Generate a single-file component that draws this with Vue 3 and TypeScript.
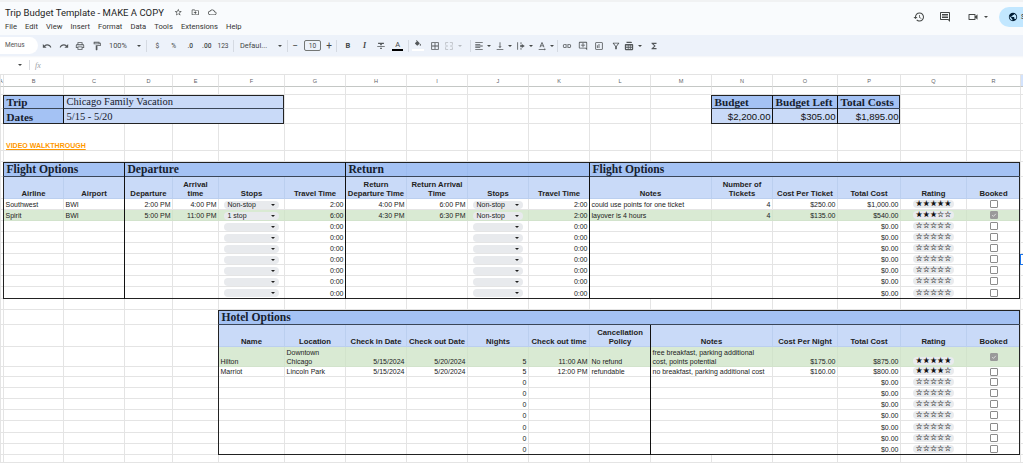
<script setup lang="ts">
// Trip budget sheet: Google Sheets chrome above one CSS grid that holds every cell.
type Cell = {
  r: number; c: number; rs: number; cs: number; cls: string
  text?: string; kind?: 'chip' | 'stars' | 'check'; stars?: number; on?: boolean
}
type Tool = { w: number; icon?: string; text?: string; cls?: string; caret?: boolean; sep?: boolean }

const icons: Record<string, string> = {
  star: 'M22 9.24l-7.19-.62L12 2 9.19 8.63 2 9.24l5.46 4.73L5.82 21 12 17.27 18.18 21l-1.63-7.03L22 9.24zM12 15.4l-3.76 2.27 1-4.28-3.32-2.88 4.38-.38L12 6.1l1.71 4.04 4.38.38-3.32 2.88 1 4.28L12 15.4z',
  folder: 'M20 6h-8l-2-2H4c-1.1 0-2 .9-2 2v12c0 1.1.9 2 2 2h16c1.1 0 2-.9 2-2V8c0-1.1-.9-2-2-2zm0 12H4V6h5.17l2 2H20v10zM12 9l-1.4 1.4 1.6 1.6H8v2h4.2l-1.6 1.6L12 17l4-4z',
  cloud: 'M19.35 10.04C18.67 6.59 15.64 4 12 4 9.11 4 6.6 5.64 5.35 8.04 2.34 8.36 0 10.91 0 14c0 3.31 2.69 6 6 6h13c2.76 0 5-2.24 5-5 0-2.64-2.05-4.78-4.65-4.96zM19 18H6c-2.21 0-4-1.79-4-4 0-2.05 1.53-3.76 3.56-3.97l1.07-.11.5-.95C8.08 7.14 9.94 6 12 6c2.62 0 4.88 1.86 5.39 4.43l.3 1.5 1.53.11c1.56.1 2.78 1.41 2.78 2.96 0 1.65-1.35 3-3 3z',
  history: 'M13 3c-4.97 0-9 4.03-9 9H1l3.89 3.89.07.14L9 12H6c0-3.87 3.13-7 7-7s7 3.13 7 7-3.13 7-7 7c-1.93 0-3.68-.79-4.94-2.06l-1.42 1.42C8.27 19.99 10.51 21 13 21c4.97 0 9-4.03 9-9s-4.03-9-9-9zm-1 5v5l4.28 2.54.72-1.21-3.5-2.08V8H12z',
  comment: 'M21.99 4c0-1.1-.89-2-1.99-2H4c-1.1 0-2 .9-2 2v12c0 1.1.9 2 2 2h14l4 4-.01-18zM20 4v13.17L18.83 16H4V4h16zM6 12h12v2H6zm0-3h12v2H6zm0-3h12v2H6z',
  video: 'M15 8v8H5V8h10m1-2H4c-.55 0-1 .45-1 1v10c0 .55.45 1 1 1h12c.55 0 1-.45 1-1v-3.5l4 4v-11l-4 4V7c0-.55-.45-1-1-1z',
  globe: 'M12 2C6.48 2 2 6.48 2 12s4.48 10 10 10 10-4.48 10-10S17.52 2 12 2zm-1 17.93c-3.95-.49-7-3.85-7-7.93 0-.62.08-1.21.21-1.79L9 15v1c0 1.1.9 2 2 2v1.93zm6.9-2.54c-.26-.81-1-1.39-1.9-1.39h-1v-3c0-.55-.45-1-1-1H8v-2h2c.55 0 1-.45 1-1V7h2c1.1 0 2-.9 2-2v-.41c2.93 1.19 5 4.06 5 7.41 0 2.08-.8 3.97-2.1 5.39z',
  undo: 'M12.5 8c-2.65 0-5.05.99-6.9 2.6L2 7v9h9l-3.62-3.62c1.39-1.16 3.16-1.88 5.12-1.88 3.54 0 6.55 2.31 7.6 5.5l2.37-.78C21.08 11.03 17.15 8 12.5 8z',
  redo: 'M18.4 10.6C16.55 8.99 14.15 8 11.5 8c-4.65 0-8.58 3.03-9.96 7.22L3.9 16c1.05-3.19 4.05-5.5 7.6-5.5 1.95 0 3.73.72 5.12 1.88L13 16h9V7l-3.6 3.6z',
  print: 'M19 8h-1V3H6v5H5c-1.66 0-3 1.34-3 3v6h4v4h12v-4h4v-6c0-1.66-1.34-3-3-3zM8 5h8v3H8V5zm8 12v2H8v-4h8v2zm2-2v-2H6v2H4v-4c0-.55.45-1 1-1h14c.55 0 1 .45 1 1v4h-2z',
  paint: 'M18 4V3c0-.55-.45-1-1-1H5c-.55 0-1 .45-1 1v4c0 .55.45 1 1 1h12c.55 0 1-.45 1-1V6h1v4H9v11c0 .55.45 1 1 1h2c.55 0 1-.45 1-1v-9h8V4h-3zM16 6H6V4h10v2z',
  strike: 'M10 19h4v-3h-4v3zM5 4v3h5v3h4V7h5V4H5zM3 14h18v-2H3v2z',
  fill: 'M16.56 8.94L7.62 0 6.21 1.41l2.38 2.38-5.15 5.15c-.59.59-.59 1.54 0 2.12l5.5 5.5c.29.29.68.44 1.06.44s.77-.15 1.06-.44l5.5-5.5c.59-.58.59-1.53 0-2.12zM19 11.5s-2 2.17-2 3.5c0 1.1.9 2 2 2s2-.9 2-2c0-1.33-2-3.5-2-3.5z',
  borders: 'M3 3v18h18V3H3zm8 16H5v-6h6v6zm0-8H5V5h6v6zm8 8h-6v-6h6v6zm0-8h-6V5h6v6z',
  merge: 'M3 3h7v2H5v4H3V3zm11 0h7v6h-2V5h-5V3zM3 15h2v4h5v2H3v-6zm16 0h2v6h-7v-2h5v-4zM3 11h6v2H3zm12 0h6v2h-6z',
  align: 'M15 15H3v2h12v-2zm0-8H3v2h12V7zM3 13h18v-2H3v2zm0 8h18v-2H3v2zM3 3v2h18V3H3z',
  valign: 'M16 13h-3V3h-2v10H8l4 4 4-4zM4 19v2h16v-2H4z',
  wrap: 'M3 3h2v18H3zM11 3h2v4h-2zm0 6h2v2h-2zm0 4h2v2h-2zm0 4h2v4h-2zM14 7l7 5-7 5v-3h-4v-4h4z',
  rotate: 'M11 3h2l5 12h-2.2l-1-2.6H9.2l-1 2.6H6L11 3zm-1 7.6h4L12 5.6l-2 5zM4 19h14v-2l3 3-3 3v-2H4z',
  link: 'M3.9 12c0-1.71 1.39-3.1 3.1-3.1h4V7H7c-2.76 0-5 2.24-5 5s2.24 5 5 5h4v-1.9H7c-1.71 0-3.1-1.39-3.1-3.1zM8 13h8v-2H8v2zm9-6h-4v1.9h4c1.71 0 3.1 1.39 3.1 3.1s-1.39 3.1-3.1 3.1h-4V17h4c2.76 0 5-2.24 5-5s-2.24-5-5-5z',
  addComment: 'M22 4c0-1.1-.9-2-2-2H4c-1.1 0-2 .9-2 2v12c0 1.1.9 2 2 2h14l4 4V4zm-2 13.17L18.83 16H4V4h16v13.17zM13 5h-2v4H7v2h4v4h2v-4h4V9h-4z',
  chart: 'M19 3H5c-1.1 0-2 .9-2 2v14c0 1.1.9 2 2 2h14c1.1 0 2-.9 2-2V5c0-1.1-.9-2-2-2zm0 16H5V5h14v14zM7 10h2v7H7zm4-3h2v10h-2z',
  filter: 'M7 6h10l-5.01 6.3L7 6zm-2.75-.39C6.27 8.2 10 13 10 13v6c0 .55.45 1 1 1h2c.55 0 1-.45 1-1v-6s3.72-4.8 5.74-7.39C20.25 4.95 19.78 4 18.95 4H5.04c-.83 0-1.3.95-.79 1.61z',
  views: 'M6 2h11a2 2 0 0 1 2 2v1H6V2zM4 7h16a2 2 0 0 1 2 2v11a2 2 0 0 1-2 2H4a2 2 0 0 1-2-2V9a2 2 0 0 1 2-2zm1 4v3h4v-3H5zm6 0v3h3v-3h-3zm5 0v3h3v-3h-3zm-11 5v3h4v-3H5zm6 0v3h3v-3h-3zm5 0v3h3v-3h-3z',
  sigma: 'M18 4H6v2l6.5 6L6 18v2h12v-3h-7l5-5-5-5h7V4z',
}

const menus = ['File', 'Edit', 'View', 'Insert', 'Format', 'Data', 'Tools', 'Extensions', 'Help']

const tools: Tool[] = [
  { w: 16.5, icon: 'undo' }, { w: 16.5, icon: 'redo' }, { w: 16.5, icon: 'print' }, { w: 16.5, icon: 'paint' },
  { w: 38, text: '100%', cls: 'zoom', caret: true },
  { w: 6, sep: true },
  { w: 16.5, text: '$' }, { w: 16.5, text: '%' }, { w: 16.5, text: '.0', cls: 'dec' }, { w: 16.5, text: '.00', cls: 'dec' }, { w: 16, text: '123' },
  { w: 4, sep: true },
  { w: 49, text: 'Defaul...', cls: 'font', caret: true },
  { w: 6, sep: true },
  { w: 10, text: '−', cls: 'big' },
  { w: 25, text: '10', cls: 'size' },
  { w: 8, text: '+', cls: 'big' },
  { w: 6.7, sep: true },
  { w: 16.6, text: 'B', cls: 'bold' }, { w: 16.6, text: 'I', cls: 'ital' }, { w: 16.6, icon: 'strike' },
  { w: 16.6, text: 'A', cls: 'color' },
  { w: 4, sep: true },
  { w: 16, icon: 'fill', cls: 'bucket' }, { w: 18, icon: 'borders' }, { w: 24, icon: 'merge', cls: 'off', caret: true },
  { w: 5.5, sep: true },
  { w: 21, icon: 'align', caret: true }, { w: 21, icon: 'valign', caret: true }, { w: 21, icon: 'wrap', caret: true }, { w: 20, icon: 'rotate', caret: true },
  { w: 2, sep: true },
  { w: 16, icon: 'link' }, { w: 16.5, icon: 'addComment' }, { w: 16.5, icon: 'chart' }, { w: 16.5, icon: 'filter' },
  { w: 24, icon: 'views', caret: true }, { w: 12, icon: 'sigma' },
]

const colWidths = [3, 60, 61, 48, 46, 66, 61, 61, 61, 61, 61, 61, 61, 61, 65, 63, 66, 54, 3]
const rowHeights = [12, 8, 14, 15, 27, 11, 15, 22, 11, 11, 11, 11, 11, 11, 11, 11, 12, 11, 15, 22, 20, 10, 11, 11, 11, 11, 12, 11, 11, 8]
const gridStyle = {
  gridTemplateColumns: colWidths.map(w => w + 'px').join(' '),
  gridTemplateRows: rowHeights.map(h => h + 'px').join(' '),
}

const col = (letter: string) => letter.charCodeAt(0) - 64

function buildCells(): Cell[] {
  const placed = new Map<string, Cell>()
  const covered = new Set<string>()
  const put = (r: number, letter: string, cell: Partial<Cell>, cs = 1) => {
    const c = col(letter)
    placed.set(r + ':' + c, { r, c, rs: 1, cs, cls: '', ...cell })
    for (let i = 1; i < cs; i++) covered.add(r + ':' + (c + i))
  }
  const text = (r: number, letter: string, value: string, cls = '', cs = 1) => put(r, letter, { text: value, cls }, cs)
  const head = (r: number, letter: string, value: string, cs = 1) => text(r, letter, value, 'head', cs)
  const title = (r: number, letter: string, value: string, cs = 1) => text(r, letter, value, 'title', cs)

  'ABCDEFGHIJKLMNOPQRS'.split('').forEach(l => text(1, l, l === 'S' ? '' : l, l === 'A' ? 'colhead first' : l === 'S' ? 'colhead picked' : 'colhead'))

  // trip + budget summary
  text(3, 'B', 'Trip', 'tag')
  text(3, 'C', 'Chicago Family Vacation', 'value', 4)
  text(4, 'B', 'Dates', 'tag')
  text(4, 'C', '5/15 - 5/20', 'value', 4)
  text(3, 'N', 'Budget', 'tag')
  text(3, 'O', 'Budget Left', 'tag')
  text(3, 'P', 'Total Costs', 'tag')
  text(4, 'N', '$2,200.00', 'money')
  text(4, 'O', '$305.00', 'money')
  text(4, 'P', '$1,895.00', 'money')
  text(5, 'B', 'VIDEO WALKTHROUGH', 'link', 2)

  // flights
  title(7, 'B', 'Flight Options', 2)
  title(7, 'D', 'Departure', 4)
  title(7, 'H', 'Return')
  title(7, 'I', ''); title(7, 'J', ''); title(7, 'K', '')
  title(7, 'L', 'Flight Options', 7)
  const flightHeads: [string, string, number?][] = [
    ['B', 'Airline'], ['C', 'Airport'], ['D', 'Departure'], ['E', 'Arrival\ntime'], ['F', 'Stops'], ['G', 'Travel Time'],
    ['H', 'Return\nDeparture Time'], ['I', 'Return Arrival\nTime'], ['J', 'Stops'], ['K', 'Travel Time'], ['L', 'Notes', 2],
    ['N', 'Number of\nTickets'], ['O', 'Cost Per Ticket'], ['P', 'Total Cost'], ['Q', 'Rating'], ['R', 'Booked'],
  ]
  flightHeads.forEach(([l, v, cs]) => head(8, l, v, cs ?? 1))

  const flights = [
    { air: 'Southwest', port: 'BWI', dep: '2:00 PM', arr: '4:00 PM', stops: 'Non-stop', time: '2:00', rdep: '4:00 PM', rarr: '6:00 PM', rstops: 'Non-stop', rtime: '2:00', note: 'could use points for one ticket', n: '4', cost: '$250.00', total: '$1,000.00', stars: 5, on: false },
    { air: 'Spirit', port: 'BWI', dep: '5:00 PM', arr: '11:00 PM', stops: '1 stop', time: '6:00', rdep: '4:30 PM', rarr: '6:30 PM', rstops: 'Non-stop', rtime: '2:00', note: 'layover is 4 hours', n: '4', cost: '$135.00', total: '$540.00', stars: 3, on: true },
  ]
  for (let i = 0; i < 9; i++) {
    const r = 9 + i
    const f = flights[i]
    const tint = i === 1 ? ' green' : ''
    text(r, 'B', f?.air ?? '', tint); text(r, 'C', f?.port ?? '', tint)
    text(r, 'D', f?.dep ?? '', 'num' + tint); text(r, 'E', f?.arr ?? '', 'num' + tint)
    put(r, 'F', { kind: 'chip', text: f?.stops ?? '', cls: 'fit' + tint })
    text(r, 'G', f?.time ?? '0:00', 'num' + tint)
    text(r, 'H', f?.rdep ?? '', 'num' + tint); text(r, 'I', f?.rarr ?? '', 'num' + tint)
    put(r, 'J', { kind: 'chip', text: f?.rstops ?? '', cls: 'fit' + tint })
    text(r, 'K', f?.rtime ?? '0:00', 'num' + tint)
    text(r, 'L', f?.note ?? '', tint, 2)
    text(r, 'N', f?.n ?? '', 'num' + tint); text(r, 'O', f?.cost ?? '', 'num' + tint)
    text(r, 'P', f?.total ?? '$0.00', 'num' + tint)
    put(r, 'Q', { kind: 'stars', stars: f?.stars ?? 0, cls: 'low' + tint })
    put(r, 'R', { kind: 'check', on: f?.on ?? false, cls: 'fit' + tint })
  }

  // hotels
  title(19, 'F', 'Hotel Options', 13)
  const hotelHeads: [string, string, number?][] = [
    ['F', 'Name'], ['G', 'Location'], ['H', 'Check in Date'], ['I', 'Check out Date'], ['J', 'Nights'], ['K', 'Check out time'],
    ['L', 'Cancellation\nPolicy'], ['M', 'Notes', 2], ['O', 'Cost Per Night'], ['P', 'Total Cost'], ['Q', 'Rating'], ['R', 'Booked'],
  ]
  hotelHeads.forEach(([l, v, cs]) => head(20, l, v, cs ?? 1))

  const hotels = [
    { name: 'Hilton', loc: 'Downtown\nChicago', inn: '5/15/2024', out: '5/20/2024', nights: '5', time: '11:00 AM', policy: 'No refund', note: 'free breakfast, parking additional\ncost, points potential', cost: '$175.00', total: '$875.00', stars: 5, on: true },
    { name: 'Marriot', loc: 'Lincoln Park', inn: '5/15/2024', out: '5/20/2024', nights: '5', time: '12:00 PM', policy: 'refundable', note: 'no breakfast, parking additional cost', cost: '$160.00', total: '$800.00', stars: 4, on: false },
  ]
  for (let i = 0; i < 9; i++) {
    const r = 21 + i
    const h = hotels[i]
    const tint = i === 0 ? ' green' : ''
    text(r, 'F', h?.name ?? '', tint); text(r, 'G', h?.loc ?? '', tint)
    text(r, 'H', h?.inn ?? '', 'num' + tint); text(r, 'I', h?.out ?? '', 'num' + tint)
    text(r, 'J', h?.nights ?? '0', 'num' + tint); text(r, 'K', h?.time ?? '', 'num' + tint)
    text(r, 'L', h?.policy ?? '', tint); text(r, 'M', h?.note ?? '', tint, 2)
    text(r, 'O', h?.cost ?? '', 'num' + tint); text(r, 'P', h?.total ?? '$0.00', 'num' + tint)
    put(r, 'Q', { kind: 'stars', stars: h?.stars ?? 0, cls: 'low' + tint })
    put(r, 'R', { kind: 'check', on: h?.on ?? false, cls: 'fit' + tint })
  }

  put(14, 'S', { cls: 'selected', text: '' })

  const cells: Cell[] = []
  rowHeights.forEach((_, ri) => colWidths.forEach((_, ci) => {
    const key = ri + 1 + ':' + (ci + 1)
    if (covered.has(key)) return
    cells.push(placed.get(key) ?? { r: ri + 1, c: ci + 1, rs: 1, cs: 1, cls: '' })
  }))
  return cells
}

const cells = buildCells()

// dark table outlines and inner rules, laid on the same grid as the cells
const rules = [
  { area: '3 / 2 / 5 / 7', cls: 'box' }, { area: '3 / 2 / 4 / 7', cls: 'under' }, { area: '3 / 3 / 5 / 7', cls: 'side' },
  { area: '3 / 14 / 5 / 17', cls: 'box' }, { area: '3 / 14 / 4 / 17', cls: 'under' }, { area: '3 / 15 / 5 / 17', cls: 'side' }, { area: '3 / 16 / 5 / 17', cls: 'side' },
  { area: '7 / 2 / 18 / 19', cls: 'box' }, { area: '7 / 2 / 8 / 19', cls: 'under' },
  { area: '7 / 4 / 18 / 8', cls: 'side' }, { area: '7 / 8 / 18 / 12', cls: 'side' }, { area: '7 / 12 / 18 / 19', cls: 'side' },
  { area: '19 / 6 / 30 / 19', cls: 'box' }, { area: '19 / 6 / 20 / 19', cls: 'under' }, { area: '20 / 13 / 30 / 19', cls: 'side' },
]

const ratingText = (n: number) => '★'.repeat(n) + '☆'.repeat(5 - n)
</script>

<template>
  <div class="app">
    <header class="top">
      <div class="doc">
        <div class="doc-title">
          <span class="name">Trip Budget Template - MAKE A COPY</span>
          <span class="doc-icons">
            <svg v-for="i in ['star', 'folder', 'cloud']" :key="i" viewBox="0 0 24 24"><path :d="icons[i]" /></svg>
          </span>
        </div>
        <nav class="menu"><span v-for="m in menus" :key="m">{{ m }}</span></nav>
      </div>
      <div class="actions">
        <svg class="act" viewBox="0 0 24 24"><path :d="icons.history" /></svg>
        <svg class="act" viewBox="0 0 24 24"><path :d="icons.comment" /></svg>
        <span class="meet"><svg class="act" viewBox="0 0 24 24"><path :d="icons.video" /></svg><i class="caret"></i></span>
        <span class="share"><svg viewBox="0 0 24 24"><path :d="icons.globe" /></svg>Share</span>
      </div>
    </header>

    <div class="toolbar">
      <span class="search">Menus</span>
      <span v-for="(t, i) in tools" :key="i" class="tool" :class="[t.cls, { sep: t.sep, 'with-caret': t.caret }]" :style="{ width: t.w + 'px' }">
        <svg v-if="t.icon" viewBox="0 0 24 24"><path :d="icons[t.icon]" /></svg>
        <span v-else-if="t.text" class="label">{{ t.text }}</span>
        <i v-if="t.caret" class="caret"></i>
      </span>
    </div>

    <div class="formula">
      <i class="caret"></i>
      <span class="bar"></span>
      <span class="fx">fx</span>
    </div>

    <main class="sheet" :style="gridStyle">
      <div
        v-for="cell in cells"
        :key="cell.r + '-' + cell.c"
        class="cell"
        :class="cell.cls"
        :style="{ gridArea: `${cell.r} / ${cell.c} / span ${cell.rs} / span ${cell.cs}` }"
      >
        <span v-if="cell.kind === 'chip'" class="chip">{{ cell.text }}<i class="caret"></i></span>
        <span v-else-if="cell.kind === 'stars'" class="rating">{{ ratingText(cell.stars ?? 0) }}</span>
        <span v-else-if="cell.kind === 'check'" class="tick" :class="{ on: cell.on }">
          <svg v-if="cell.on" viewBox="0 0 10 10"><path d="M2 5.2l2.1 2.1L8 3.1" /></svg>
        </span>
        <span v-else-if="cell.text" class="txt">{{ cell.text }}</span>
      </div>
      <div v-for="rule in rules" :key="rule.area + rule.cls" class="rule" :class="rule.cls" :style="{ gridArea: rule.area }"></div>
    </main>
  </div>
</template>

<style>
html, body { margin: 0; background: #fff; overflow: hidden; }
</style>

<style scoped>
.app {
  width: 1023px;
  height: 463px;
  overflow: hidden;
  font-family: "Liberation Sans", Arial, sans-serif;
  color: #1f1f1f;
  background: #fff;
}
svg { display: block; fill: #444746; }
.caret {
  display: inline-block;
  width: 0;
  height: 0;
  border-left: 2.2px solid transparent;
  border-right: 2.2px solid transparent;
  border-top: 2.4px solid #444746;
}

/* title + menu */
.top {
  height: 33px;
  margin-top: 2px;
  display: flex;
  justify-content: space-between;
  background: #f9fbfd;
  box-shadow: 0 -2px 0 #f1f2f3;
}
.doc { padding-left: 5px; font-family: Roboto, "Open Sans", sans-serif; }
.doc-title { display: flex; align-items: center; height: 20px; }
.name { font-size: 9.5px; width: 169px; white-space: nowrap; color: #1f1f1f; }
.doc-icons { display: flex; gap: 8.5px; }
.doc-icons svg { width: 8.5px; height: 8.5px; }
.menu { display: flex; font-size: 7.6px; color: #333; gap: 8.1px; }
.actions { display: flex; align-items: center; padding-bottom: 3px; }
.act { width: 12px; height: 12px; }
.act + .act { margin-left: 14px; }
.meet { display: flex; align-items: center; gap: 5px; margin-left: 16px; }
.share {
  display: flex;
  align-items: center;
  gap: 3px;
  width: 44px;
  height: 20px;
  margin: 0 -20px 0 11.5px;
  padding-left: 9px;
  box-sizing: border-box;
  border-radius: 10px;
  background: #c2e7ff;
  font: 7px Roboto, sans-serif;
}
.share svg { width: 10px; height: 10px; fill: #001d35; flex: none; }

/* toolbar */
.toolbar {
  height: 21px;
  display: flex;
  align-items: center;
  background: #edf2fa;
  font-family: Roboto, sans-serif;
  color: #444746;
}
.search {
  width: 38px;
  height: 17px;
  margin-right: 1px;
  padding-left: 5px;
  box-sizing: border-box;
  border-radius: 0 9px 9px 0;
  background: #fff;
  font-size: 6.5px;
  line-height: 17px;
  color: #555;
}
.tool {
  display: flex;
  align-items: center;
  justify-content: center;
  height: 17px;
  flex: none;
  box-sizing: border-box;
  font-size: 6.6px;
}
.tool svg { width: 10px; height: 10px; flex: none; fill: #53575a; }
.tool.with-caret { justify-content: flex-start; gap: 3.5px; }
.tool.sep::before { content: ''; width: 1px; height: 12px; background: #d5dae2; }
.zoom { padding-left: 4px; gap: 6px !important; font-size: 7.4px; }
.zoom .label { width: 22px; }
.font { padding-left: 5px; font-size: 7.4px; }
.font .label { width: 34px; }
.size .label {
  width: 17px;
  height: 11px;
  border: 0.7px solid #747775;
  border-radius: 2px;
  box-sizing: border-box;
  text-align: center;
  line-height: 10px;
}
.big { font-size: 10px; }
.bold { font-weight: 700; font-size: 7.5px; }
.ital { font-style: italic; font-family: "Liberation Serif", serif; font-size: 8px; font-weight: 700; }
.color .label { font-size: 7.5px; border-bottom: 2px solid #000; padding: 0 3px; line-height: 8px; }
.bucket { flex-direction: column; }
.bucket svg { height: 8px; }
.bucket::after { content: ''; width: 12px; height: 2px; background: #fff; margin-top: 0.5px; }
.off svg { fill: #b6bac0; }
.off .caret { border-top-color: #b6bac0; }
.dec .label { font-weight: 500; }

/* formula bar */
.formula {
  height: 19px;
  display: flex;
  align-items: center;
  background: #fff;
  box-shadow: inset 0 2px 2px -1px #f3f5f8;
  padding-left: 18px;
  box-sizing: border-box;
  border-bottom: 1px solid #e3e3e3;
}
.formula .bar { width: 1px; height: 10px; background: #dadce0; margin-left: 7px; }
.formula .fx { margin-left: 5px; font: italic 8px "Liberation Serif", serif; color: #9aa0a6; }

/* sheet grid */
.sheet { display: grid; }
.cell {
  display: flex;
  align-items: flex-end;
  min-width: 0;
  padding: 0 1.5px 0;
  box-sizing: border-box;
  border-left: 1px solid #e4e4e4;
  border-bottom: 1px solid #e4e4e4;
  font-size: 7px;
  line-height: 8.7px;
  white-space: pre;
  color: #222;
}
.txt { display: block; margin-bottom: -0.5px; }
.num { justify-content: flex-end; }
.fit { padding: 0; align-items: center; justify-content: center; }
.low { padding: 0 0 1px; justify-content: center; }
.green { background: #d9ead3; border-color: #d2e3cc; }

.colhead {
  align-items: center;
  justify-content: center;
  padding: 1px 0 0;
  border-bottom-color: #c4c7c5;
  border-bottom-width: 1.5px;
  font-size: 5.6px;
  color: #5f6368;
}
.colhead.first { justify-content: flex-start; text-indent: -2px; overflow: hidden; }
.colhead.picked { background: #d3e3fd; }
.selected { border: 1px solid #1a73e8; border-right: 0; }

.tag, .title, .value { font-family: "Liberation Serif", "DejaVu Serif", serif; }
.cell.tag { background: #a4c2f4; border-color: #94b4ea; font-size: 11.2px; font-weight: 700; align-items: center; color: #16202e; padding: 2px 0 0 2.5px; }
.cell.value { background: #c9daf8; border-color: #c9daf8; font-size: 10.5px; align-items: center; color: #16202e; padding: 2px 0 0 2.5px; }
.cell.money { background: #c9daf8; border-color: #c9daf8; justify-content: flex-end; align-items: center; font-size: 9.6px; color: #111; padding: 2px 1.5px 0 0; }
.cell.link { color: #ff9900; font-weight: 700; text-decoration: underline; padding: 0 0 0 2px; }
.cell.title {
  background: #a4c2f4;
  border-color: #9dbcef;
  font-size: 11.6px;
  font-weight: 700;
  align-items: center;
  padding: 2px 0 0 2.5px;
  color: #16202e;
  overflow: visible;
}
.cell.head {
  background: #c9daf8;
  border-color: #bbcfef;
  justify-content: center;
  text-align: center;
  font-size: 7.7px;
  font-weight: 700;
  line-height: 9.5px;
  color: #222;
}

.chip {
  display: flex;
  align-items: center;
  justify-content: space-between;
  width: calc(100% - 10px);
  height: 8px;
  margin-top: 1px;
  padding: 0 4px 0 3.5px;
  box-sizing: border-box;
  border-radius: 4px;
  background: #e8eaed;
  line-height: 8px;
}
.chip .caret { border-top-color: #1f1f1f; margin-left: auto; }
.rating {
  display: block;
  width: 41px;
  height: 8px;
  border-radius: 4px;
  background: #e9ebee;
  font: 8px/8px "DejaVu Sans", sans-serif;
  -webkit-text-stroke: 0.08px #222;
  text-align: center;
  color: #111;
}
.tick {
  display: block;
  width: 8px;
  height: 8px;
  box-sizing: border-box;
  border: 1px solid #8c8c8c;
  border-radius: 1px;
  background: #fff;
}
.tick.on { background: #9a9a9a; border-color: #9a9a9a; }
.tick svg { width: 6px; height: 6px; fill: none; stroke: #e8e8e8; stroke-width: 1.4; }

/* table outlines drawn over the cells */
.rule { z-index: 2; pointer-events: none; box-sizing: border-box; }
.rule.box { border: 1px solid #222; }
.rule.under { border-bottom: 1px solid #3a4658; }
.rule.side { border-left: 1px solid #111; }
</style>
